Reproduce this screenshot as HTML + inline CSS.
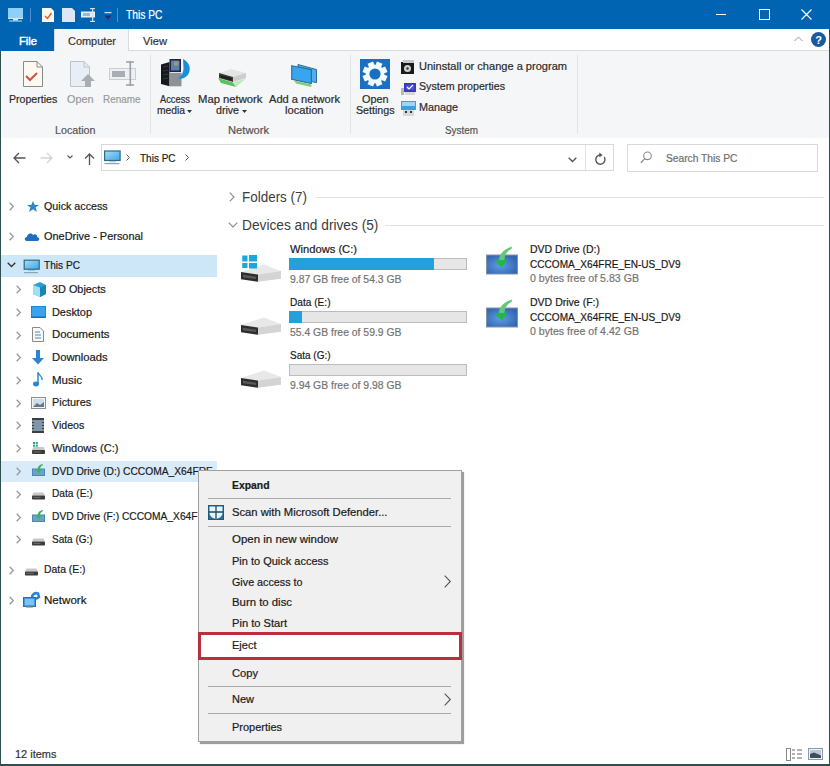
<!DOCTYPE html>
<html><head><meta charset="utf-8"><style>
html,body{margin:0;padding:0;width:830px;height:766px;overflow:hidden;background:#ffffff;position:relative}
.t{position:absolute;white-space:nowrap;-webkit-text-stroke:0.2px currentColor;font-family:"Liberation Sans",sans-serif;transform-origin:0 0}
svg{overflow:visible}
</style></head><body>
<div style="position:absolute;left:0px;top:0px;width:830px;height:29px;background:#0064b3"></div>
<div style="position:absolute;left:0px;top:29px;width:830px;height:22px;background:#ffffff"></div>
<div style="position:absolute;left:0px;top:50px;width:830px;height:1px;background:#dadbdc"></div>
<div style="position:absolute;left:0px;top:29px;width:54px;height:22px;background:#0064b3"></div>
<div style="position:absolute;left:54px;top:29px;width:75px;height:22px;background:#f5f6f7;box-shadow:inset 1px 0 0 #dadbdc, inset -1px 0 0 #dadbdc"></div>
<div class="t" style="left:19.00px;top:35.65px;font-size:11.00px;line-height:11.00px;color:#ffffff;transform:scaleX(1.0155);-webkit-text-stroke:0.45px #ffffff;">File</div>
<div class="t" style="left:68.00px;top:35.65px;font-size:11.00px;line-height:11.00px;color:#333333;transform:scaleX(0.9938);">Computer</div>
<div class="t" style="left:143.00px;top:35.65px;font-size:11.00px;line-height:11.00px;color:#333333;transform:scaleX(1.0151);">View</div>
<svg style="position:absolute;left:8px;top:8px;" width="16" height="14" viewBox="0 0 16 14"><rect x="0" y="0" width="15" height="10" fill="#8fd0fb"/><rect x="0" y="10" width="15" height="1" fill="#d8f0ff"/><rect x="5" y="11" width="5" height="1.5" fill="#cdeafd"/><rect x="1" y="12.5" width="13" height="1" fill="#bfe4fb"/></svg>
<div style="position:absolute;left:30px;top:8px;width:1px;height:14px;background:#4d8fd0"></div>
<svg style="position:absolute;left:42px;top:8px;" width="12" height="14" viewBox="0 0 12 14"><path d="M0 0H9L12 3V14H0Z" fill="#fdf7ef"/><path d="M3 8L5.5 10.5L9.5 5" stroke="#d0603a" stroke-width="1.4" fill="none"/></svg>
<svg style="position:absolute;left:62px;top:8px;" width="13" height="14" viewBox="0 0 13 14"><path d="M0 0H10L13 3V14H0Z" fill="#dbe8f6"/></svg>
<svg style="position:absolute;left:81px;top:8px;" width="16" height="14" viewBox="0 0 16 14"><rect x="0" y="3.5" width="14" height="6" fill="#e6eef6"/><rect x="2" y="5" width="7" height="3" fill="#9fb6cc"/><rect x="11" y="0" width="1.2" height="14" fill="#cfe0f0"/><rect x="9" y="0" width="5" height="1.2" fill="#cfe0f0"/><rect x="9" y="12.8" width="5" height="1.2" fill="#cfe0f0"/></svg>
<svg style="position:absolute;left:104px;top:12px;" width="8" height="8" viewBox="0 0 8 8"><rect x="0.5" y="0" width="7" height="1.2" fill="#cfe3f7"/><path d="M0.5 3.5H7.5L4 7.5Z" fill="#2b2b6b"/></svg>
<div style="position:absolute;left:117px;top:8px;width:1px;height:14px;background:#4d8fd0"></div>
<div class="t" style="left:126.00px;top:8.80px;font-size:12.00px;line-height:12.00px;color:#ffffff;transform:scaleX(0.8553);">This PC</div>
<div style="position:absolute;left:716px;top:14px;width:10px;height:1px;background:#ffffff"></div>
<div style="position:absolute;left:759px;top:9px;width:9px;height:9px;border:1px solid #ffffff"></div>
<svg style="position:absolute;left:801px;top:9px;" width="12" height="11" viewBox="0 0 12 11"><path d="M0.5 0.5L10.5 10.5M10.5 0.5L0.5 10.5" stroke="#fff" stroke-width="1.1"/></svg>
<svg style="position:absolute;left:794px;top:36px;" width="9" height="6" viewBox="0 0 9 6"><path d="M0.5 5L4.5 1L8.5 5" stroke="#9a9a9a" stroke-width="1" fill="none"/></svg>
<svg style="position:absolute;left:811px;top:32px;" width="15" height="15" viewBox="0 0 15 15"><circle cx="7.5" cy="7.5" r="7.5" fill="#1c5aa0"/><text x="7.5" y="12" font-family="Liberation Sans" font-weight="bold" font-size="11" fill="#fff" text-anchor="middle">?</text></svg>
<div style="position:absolute;left:0px;top:51px;width:830px;height:87px;background:#f5f6f7"></div>
<div style="position:absolute;left:0px;top:138px;width:830px;height:1px;background:#dadbdc"></div>
<div style="position:absolute;left:150px;top:55px;width:1px;height:79px;background:#e2e3e4"></div>
<div style="position:absolute;left:350px;top:55px;width:1px;height:79px;background:#e2e3e4"></div>
<div style="position:absolute;left:577px;top:55px;width:1px;height:79px;background:#e2e3e4"></div>
<div class="t" style="left:9.00px;top:93.65px;font-size:11.00px;line-height:11.00px;color:#2b2b2b;transform:scaleX(0.9614);">Properties</div>
<div class="t" style="left:67.00px;top:93.65px;font-size:11.00px;line-height:11.00px;color:#9a9a9a;transform:scaleX(0.9848);">Open</div>
<div class="t" style="left:103.00px;top:93.65px;font-size:11.00px;line-height:11.00px;color:#9a9a9a;transform:scaleX(0.8995);">Rename</div>
<div class="t" style="left:55.00px;top:125.45px;font-size:11.00px;line-height:11.00px;color:#555555;transform:scaleX(0.9714);">Location</div>
<div class="t" style="left:160.00px;top:93.65px;font-size:11.00px;line-height:11.00px;color:#2b2b2b;transform:scaleX(0.8462);">Access</div>
<div class="t" style="left:157.00px;top:105.15px;font-size:11.00px;line-height:11.00px;color:#2b2b2b;transform:scaleX(0.9346);">media</div>
<div class="t" style="left:198.40px;top:93.65px;font-size:11.00px;line-height:11.00px;color:#2b2b2b;transform:scaleX(1.0243);">Map network</div>
<div class="t" style="left:216.00px;top:105.15px;font-size:11.00px;line-height:11.00px;color:#2b2b2b;transform:scaleX(0.9646);">drive</div>
<div class="t" style="left:269.00px;top:93.65px;font-size:11.00px;line-height:11.00px;color:#2b2b2b;transform:scaleX(1.0097);">Add a network</div>
<div class="t" style="left:284.70px;top:105.15px;font-size:11.00px;line-height:11.00px;color:#2b2b2b;transform:scaleX(1.0180);">location</div>
<div class="t" style="left:228.00px;top:125.45px;font-size:11.00px;line-height:11.00px;color:#555555;transform:scaleX(1.0163);">Network</div>
<div class="t" style="left:362.00px;top:93.65px;font-size:11.00px;line-height:11.00px;color:#2b2b2b;transform:scaleX(0.9848);">Open</div>
<div class="t" style="left:356.00px;top:105.15px;font-size:11.00px;line-height:11.00px;color:#2b2b2b;transform:scaleX(0.9711);">Settings</div>
<div class="t" style="left:419.10px;top:60.55px;font-size:11.00px;line-height:11.00px;color:#2b2b2b;transform:scaleX(1.0043);">Uninstall or change a program</div>
<div class="t" style="left:419.10px;top:81.25px;font-size:11.00px;line-height:11.00px;color:#2b2b2b;transform:scaleX(0.9701);">System properties</div>
<div class="t" style="left:419.10px;top:102.05px;font-size:11.00px;line-height:11.00px;color:#2b2b2b;transform:scaleX(0.9811);">Manage</div>
<div class="t" style="left:445.20px;top:125.45px;font-size:11.00px;line-height:11.00px;color:#555555;transform:scaleX(0.8998);">System</div>
<svg style="position:absolute;left:187px;top:110px;" width="5" height="3" viewBox="0 0 5 3"><path d="M0 0H5L2.5 3Z" fill="#333"/></svg>
<svg style="position:absolute;left:242px;top:110px;" width="5" height="3" viewBox="0 0 5 3"><path d="M0 0H5L2.5 3Z" fill="#333"/></svg>
<svg style="position:absolute;left:23px;top:61px;" width="20" height="26" viewBox="0 0 20 26"><path d="M0.5 0.5H14L19.5 6V25.5H0.5Z" fill="#fdf8f2" stroke="#8a8a8a"/><path d="M14 0.5V6H19.5" fill="none" stroke="#8a8a8a"/><path d="M3 15L7 19L14 12" stroke="#c9573a" stroke-width="2" fill="none"/></svg>
<svg style="position:absolute;left:70px;top:61px;" width="26" height="26" viewBox="0 0 26 26"><path d="M0.5 0.5H14L19.5 6V25.5H0.5Z" fill="#e8eef6" stroke="#bcc3cb"/><path d="M14 0.5V6H19.5" fill="none" stroke="#bcc3cb"/><path d="M11 20L18 13L25 20H21V26H15V20Z" fill="#a9adb2"/></svg>
<svg style="position:absolute;left:109px;top:61px;" width="27" height="25" viewBox="0 0 27 25"><rect x="0.5" y="7.5" width="26" height="11" fill="#eef1f4" stroke="#c9ced3"/><rect x="3" y="10" width="13" height="6" fill="#a8aeb4"/><rect x="20.5" y="0" width="1.6" height="25" fill="#9aa0a6"/><path d="M17 1H25M17 24H25" stroke="#9aa0a6" stroke-width="1.6"/></svg>
<svg style="position:absolute;left:161px;top:58px;" width="30" height="29" viewBox="0 0 30 29"><path d="M0 6.5L8.5 4V28.3L0 26Z" fill="#161a1e"/><path d="M2 9L7 8M2 13L7 12M2 17L7 16M2 21L7 20" stroke="#3a4048" stroke-width="0.8"/><rect x="8.5" y="14.8" width="12" height="13.5" fill="#8d9297"/><rect x="8.5" y="1" width="11.5" height="13" fill="#1c2440"/><rect x="10" y="2.5" width="8.5" height="10" fill="#5d7cb4"/><rect x="13" y="3.5" width="4.5" height="4" fill="#8fa070"/><path d="M22 1C28 4 30.5 10 27.5 16C25 20 21 21.5 16.5 20.5C20 18.5 22.5 15 22.5 10Z" fill="#1d8fd6"/></svg>
<svg style="position:absolute;left:215px;top:66px;" width="33" height="23" viewBox="0 0 33 23"><path d="M4 7L16 3L31 7L18 11Z" fill="#e4e4e4"/><path d="M4 7L18 11V16L4 12Z" fill="#3a3a3a"/><path d="M5.5 9L16.5 12V14.5L5.5 11.5Z" fill="#1e1e1e"/><path d="M18 11L31 7V12L18 16Z" fill="#cdcdcd"/><path d="M3 12L18 16.5L21 21L6 17Z" fill="#5cc060"/><path d="M18 16.5L31 12.5L21 21Z" fill="#bfe8c0"/></svg>
<svg style="position:absolute;left:291px;top:64px;" width="27" height="24" viewBox="0 0 27 24"><path d="M7 0.5L25.5 5.6V18.6L20.3 17.5V5.8L7 3Z" fill="#4fb0ea" stroke="#2c6d9c" stroke-width="1"/><path d="M0.7 1.7L20.3 5.8V19.5L0.7 15.2Z" fill="#38a6ee" stroke="#2c6d9c" stroke-width="1.1"/><path d="M3 16.5L20 20.5L20.5 23L5 19.5Z" fill="#7fcc78"/></svg>
<svg style="position:absolute;left:360px;top:59px;" width="30" height="30" viewBox="0 0 30 30"><rect width="30" height="30" fill="#1b6fc2"/><g transform="translate(15 15)" fill="#f4fbff"><rect x="-3" y="-12.3" width="6" height="6" transform="rotate(22.5)"/><rect x="-3" y="-12.3" width="6" height="6" transform="rotate(67.5)"/><rect x="-3" y="-12.3" width="6" height="6" transform="rotate(112.5)"/><rect x="-3" y="-12.3" width="6" height="6" transform="rotate(157.5)"/><rect x="-3" y="-12.3" width="6" height="6" transform="rotate(202.5)"/><rect x="-3" y="-12.3" width="6" height="6" transform="rotate(247.5)"/><rect x="-3" y="-12.3" width="6" height="6" transform="rotate(292.5)"/><rect x="-3" y="-12.3" width="6" height="6" transform="rotate(337.5)"/><circle r="9.3"/></g><circle cx="15" cy="15" r="5.6" fill="#1b6fc2"/></svg>
<svg style="position:absolute;left:401px;top:60px;" width="14" height="14" viewBox="0 0 14 14"><rect x="0" y="2" width="13" height="12" fill="#1a1a1a"/><rect x="2" y="0" width="11" height="3" fill="#c8c8c8"/><circle cx="6.5" cy="8.5" r="3.5" fill="#d0d0d0"/><circle cx="6.5" cy="8.5" r="1.2" fill="#333"/></svg>
<svg style="position:absolute;left:401px;top:82px;" width="15" height="13" viewBox="0 0 15 13"><rect x="0" y="6" width="3" height="7" fill="#b8b8b8"/><rect x="3" y="1" width="12" height="9" fill="#3a3ac0"/><rect x="5" y="3" width="8" height="5" fill="#4d4dd8"/><path d="M6 5L8 7L12 3" stroke="#fff" stroke-width="1.2" fill="none"/><rect x="4" y="10" width="10" height="3" fill="#d8d8d8"/></svg>
<svg style="position:absolute;left:401px;top:101px;" width="15" height="15" viewBox="0 0 15 15"><rect x="0" y="0" width="15" height="9" fill="#3ba0e0"/><rect x="1" y="1" width="13" height="4" fill="#9fd4f5"/><rect x="2" y="9" width="11" height="6" fill="#d8d8d8"/><rect x="4" y="10" width="2" height="2" fill="#333"/><rect x="9" y="10" width="2" height="2" fill="#333"/></svg>
<div style="position:absolute;left:0px;top:138px;width:830px;height:40px;background:#ffffff"></div>
<svg style="position:absolute;left:13px;top:152px;" width="13" height="12" viewBox="0 0 13 12"><path d="M6 1L1 6L6 11M1 6H12.5" stroke="#555" stroke-width="1.3" fill="none"/></svg>
<svg style="position:absolute;left:40px;top:152px;" width="13" height="12" viewBox="0 0 13 12"><path d="M7 1L12 6L7 11M0.5 6H12" stroke="#d4d4d4" stroke-width="1.3" fill="none"/></svg>
<svg style="position:absolute;left:67px;top:155px;" width="6" height="4" viewBox="0 0 6 4"><path d="M0.5 0.5L3 3L5.5 0.5" stroke="#555" stroke-width="1.1" fill="none"/></svg>
<svg style="position:absolute;left:84px;top:153px;" width="11" height="12" viewBox="0 0 11 12"><path d="M1 5.5L5.5 1L10 5.5M5.5 1V12" stroke="#555" stroke-width="1.3" fill="none"/></svg>
<div style="position:absolute;left:101px;top:144px;width:513px;height:27px;border:1px solid #d9d9d9;box-sizing:border-box"></div>
<div style="position:absolute;left:585px;top:145px;width:1px;height:25px;background:#e3e3e3"></div>
<svg style="position:absolute;left:104px;top:150px;" width="17" height="15" viewBox="0 0 17 15"><defs><linearGradient id="mg2" x1="0" y1="0" x2="1" y2="1"><stop offset="0" stop-color="#a8dcf8"/><stop offset="1" stop-color="#3aa8e6"/></linearGradient></defs><rect x="0.6" y="1" width="15.5" height="9.5" fill="url(#mg2)" stroke="#2f6a86" stroke-width="1.2"/><rect x="5" y="11.3" width="7" height="1" fill="#9cc4dc"/><rect x="0.5" y="13" width="15" height="1.2" fill="#8aa4bc"/></svg>
<svg style="position:absolute;left:126px;top:154px;" width="4" height="7" viewBox="0 0 4 7"><path d="M0.5 0.5L3.5 3.5L0.5 6.5" stroke="#555" stroke-width="1" fill="none"/></svg>
<div class="t" style="left:140.00px;top:152.92px;font-size:11.50px;line-height:11.50px;color:#1a1a1a;transform:scaleX(0.8705);">This PC</div>
<svg style="position:absolute;left:185px;top:154px;" width="4" height="7" viewBox="0 0 4 7"><path d="M0.5 0.5L3.5 3.5L0.5 6.5" stroke="#555" stroke-width="1" fill="none"/></svg>
<svg style="position:absolute;left:568px;top:156.5px;" width="9" height="6" viewBox="0 0 9 6"><path d="M0.7 0.7L4.5 4.5L8.3 0.7" stroke="#555" stroke-width="1.4" fill="none"/></svg>
<svg style="position:absolute;left:594px;top:152px;" width="13" height="14" viewBox="0 0 13 14"><path d="M10.3 5.2A4.6 4.6 0 1 1 6.5 3" stroke="#555" stroke-width="1.4" fill="none"/><path d="M5.3 0.6L8.6 3L5.3 5.4Z" fill="#555"/></svg>
<div style="position:absolute;left:627px;top:144px;width:191px;height:28px;border:1px solid #d9d9d9;box-sizing:border-box"></div>
<svg style="position:absolute;left:640px;top:151px;" width="12" height="13" viewBox="0 0 12 13"><circle cx="7.5" cy="4.8" r="3.8" stroke="#8a8a8a" stroke-width="1.1" fill="none"/><path d="M4.8 7.6L0.8 11.8" stroke="#8a8a8a" stroke-width="1.3"/></svg>
<div class="t" style="left:665.70px;top:153.15px;font-size:11.00px;line-height:11.00px;color:#6d6d6d;transform:scaleX(0.9306);">Search This PC</div>
<div style="position:absolute;left:1px;top:255px;width:216px;height:22px;background:#cde6f8"></div>
<div style="position:absolute;left:1px;top:461px;width:216px;height:21px;background:#d9ebf9"></div>
<svg style="position:absolute;left:9px;top:202px;" width="5" height="9" viewBox="0 0 5 9"><path d="M0.7 0.7L4.3 4.5L0.7 8.3" stroke="#9a9a9a" stroke-width="1.3" fill="none"/></svg>
<svg style="position:absolute;left:9px;top:232px;" width="5" height="9" viewBox="0 0 5 9"><path d="M0.7 0.7L4.3 4.5L0.7 8.3" stroke="#9a9a9a" stroke-width="1.3" fill="none"/></svg>
<svg style="position:absolute;left:7px;top:262px;" width="9" height="6" viewBox="0 0 9 6"><path d="M0.7 0.7L4.5 4.5L8.3 0.7" stroke="#333" stroke-width="1.3" fill="none"/></svg>
<div class="t" style="left:44.00px;top:200.65px;font-size:11.00px;line-height:11.00px;color:#1a1a1a;transform:scaleX(0.9739);">Quick access</div>
<div class="t" style="left:44.00px;top:230.65px;font-size:11.00px;line-height:11.00px;color:#1a1a1a;transform:scaleX(0.9935);">OneDrive - Personal</div>
<div class="t" style="left:44.00px;top:260.25px;font-size:11.00px;line-height:11.00px;color:#1a1a1a;transform:scaleX(0.9203);">This PC</div>
<svg style="position:absolute;left:27px;top:201px;" width="12" height="11" viewBox="0 0 12 11"><path d="M6 0L7.8 4H12L8.6 6.6L10 11L6 8.2L2 11L3.4 6.6L0 4H4.2Z" fill="#2f86c8"/></svg>
<svg style="position:absolute;left:24px;top:231px;" width="15" height="10" viewBox="0 0 15 10"><path d="M3 10C0 10 0 6 3 6C3 3 7 1 9 4C11 2 14 4 13 6C16 6 16 10 13 10Z" fill="#1e6fc0"/></svg>
<svg style="position:absolute;left:23px;top:259px;" width="17" height="15" viewBox="0 0 17 15"><defs><linearGradient id="mg1" x1="0" y1="0" x2="1" y2="1"><stop offset="0" stop-color="#a8dcf8"/><stop offset="1" stop-color="#3aa8e6"/></linearGradient></defs><rect x="1.2" y="1.2" width="15" height="9" fill="url(#mg1)" stroke="#2f6a86" stroke-width="1.2"/><rect x="5" y="11" width="7" height="1" fill="#9cc4dc"/><rect x="1" y="13" width="14" height="1.2" fill="#8aa4bc"/></svg>
<svg style="position:absolute;left:16px;top:285px;" width="5" height="9" viewBox="0 0 5 9"><path d="M0.7 0.7L4.3 4.5L0.7 8.3" stroke="#9a9a9a" stroke-width="1.3" fill="none"/></svg>
<div class="t" style="left:51.50px;top:283.65px;font-size:11.00px;line-height:11.00px;color:#1a1a1a;transform:scaleX(0.9869);">3D Objects</div>
<svg style="position:absolute;left:16px;top:308px;" width="5" height="9" viewBox="0 0 5 9"><path d="M0.7 0.7L4.3 4.5L0.7 8.3" stroke="#9a9a9a" stroke-width="1.3" fill="none"/></svg>
<div class="t" style="left:51.50px;top:306.65px;font-size:11.00px;line-height:11.00px;color:#1a1a1a;transform:scaleX(0.9912);">Desktop</div>
<svg style="position:absolute;left:16px;top:330.6px;" width="5" height="9" viewBox="0 0 5 9"><path d="M0.7 0.7L4.3 4.5L0.7 8.3" stroke="#9a9a9a" stroke-width="1.3" fill="none"/></svg>
<div class="t" style="left:51.50px;top:329.25px;font-size:11.00px;line-height:11.00px;color:#1a1a1a;transform:scaleX(1.0335);">Documents</div>
<svg style="position:absolute;left:16px;top:353.3px;" width="5" height="9" viewBox="0 0 5 9"><path d="M0.7 0.7L4.3 4.5L0.7 8.3" stroke="#9a9a9a" stroke-width="1.3" fill="none"/></svg>
<div class="t" style="left:51.50px;top:351.95px;font-size:11.00px;line-height:11.00px;color:#1a1a1a;transform:scaleX(1.0235);">Downloads</div>
<svg style="position:absolute;left:16px;top:375.9px;" width="5" height="9" viewBox="0 0 5 9"><path d="M0.7 0.7L4.3 4.5L0.7 8.3" stroke="#9a9a9a" stroke-width="1.3" fill="none"/></svg>
<div class="t" style="left:51.50px;top:374.55px;font-size:11.00px;line-height:11.00px;color:#1a1a1a;transform:scaleX(1.0444);">Music</div>
<svg style="position:absolute;left:16px;top:398.6px;" width="5" height="9" viewBox="0 0 5 9"><path d="M0.7 0.7L4.3 4.5L0.7 8.3" stroke="#9a9a9a" stroke-width="1.3" fill="none"/></svg>
<div class="t" style="left:51.50px;top:397.25px;font-size:11.00px;line-height:11.00px;color:#1a1a1a;transform:scaleX(0.9865);">Pictures</div>
<svg style="position:absolute;left:16px;top:421.3px;" width="5" height="9" viewBox="0 0 5 9"><path d="M0.7 0.7L4.3 4.5L0.7 8.3" stroke="#9a9a9a" stroke-width="1.3" fill="none"/></svg>
<div class="t" style="left:51.50px;top:419.95px;font-size:11.00px;line-height:11.00px;color:#1a1a1a;transform:scaleX(0.9660);">Videos</div>
<svg style="position:absolute;left:16px;top:444px;" width="5" height="9" viewBox="0 0 5 9"><path d="M0.7 0.7L4.3 4.5L0.7 8.3" stroke="#9a9a9a" stroke-width="1.3" fill="none"/></svg>
<div class="t" style="left:51.50px;top:442.65px;font-size:11.00px;line-height:11.00px;color:#1a1a1a;transform:scaleX(1.0060);">Windows (C:)</div>
<svg style="position:absolute;left:16px;top:467px;" width="5" height="9" viewBox="0 0 5 9"><path d="M0.7 0.7L4.3 4.5L0.7 8.3" stroke="#9a9a9a" stroke-width="1.3" fill="none"/></svg>
<div style="position:absolute;left:0;top:461px;width:217px;height:20px;overflow:hidden">
<div class="t" style="left:51.5px;top:4.65px;font-size:11px;line-height:11px;color:#1a1a1a;transform:scaleX(0.930)">DVD Drive (D:) CCCOMA_X64FRE</div></div>
<svg style="position:absolute;left:16px;top:489.7px;" width="5" height="9" viewBox="0 0 5 9"><path d="M0.7 0.7L4.3 4.5L0.7 8.3" stroke="#9a9a9a" stroke-width="1.3" fill="none"/></svg>
<div class="t" style="left:51.50px;top:488.35px;font-size:11.00px;line-height:11.00px;color:#1a1a1a;transform:scaleX(0.9248);">Data (E:)</div>
<svg style="position:absolute;left:16px;top:512.5px;" width="5" height="9" viewBox="0 0 5 9"><path d="M0.7 0.7L4.3 4.5L0.7 8.3" stroke="#9a9a9a" stroke-width="1.3" fill="none"/></svg>
<div style="position:absolute;left:0;top:506px;width:199px;height:20px;overflow:hidden">
<div class="t" style="left:51.5px;top:4.65px;font-size:11px;line-height:11px;color:#1a1a1a;transform:scaleX(0.930)">DVD Drive (F:) CCCOMA_X64FRE</div></div>
<svg style="position:absolute;left:16px;top:535.2px;" width="5" height="9" viewBox="0 0 5 9"><path d="M0.7 0.7L4.3 4.5L0.7 8.3" stroke="#9a9a9a" stroke-width="1.3" fill="none"/></svg>
<div class="t" style="left:51.50px;top:533.85px;font-size:11.00px;line-height:11.00px;color:#1a1a1a;transform:scaleX(0.9121);">Sata (G:)</div>
<svg style="position:absolute;left:31px;top:282px;" width="15" height="15" viewBox="0 0 15 15"><path d="M2 3L9 0L15 3V12L9 15L2 12Z" fill="#2aa0d0"/><path d="M2 3L9 5.5V15L2 12Z" fill="#9fe0f5"/><path d="M9 5.5L15 3V12L9 15Z" fill="#1a86b8"/></svg>
<svg style="position:absolute;left:31px;top:306px;" width="15" height="12" viewBox="0 0 15 12"><rect x="0" y="0" width="15" height="11" fill="#1d87d8"/><rect x="1" y="1" width="13" height="9" fill="#3aa3ee"/><rect x="0" y="11" width="15" height="1" fill="#2868a0"/></svg>
<svg style="position:absolute;left:32px;top:326.6px;" width="12" height="15" viewBox="0 0 12 15"><path d="M0.5 0.5H8L11.5 4V14.5H0.5Z" fill="#f8f8f8" stroke="#8a8a8a"/><path d="M3 5H8M3 8H9M3 11H9" stroke="#4a8abc" stroke-width="1"/></svg>
<svg style="position:absolute;left:31px;top:350.3px;" width="14" height="15" viewBox="0 0 14 15"><path d="M5 0H9V8H13L7 14.5L1 8H5Z" fill="#2a86d0"/></svg>
<svg style="position:absolute;left:33px;top:371.9px;" width="11" height="15" viewBox="0 0 11 15"><path d="M5 0.5V11" stroke="#2a86d0" stroke-width="1.5"/><ellipse cx="3" cy="12" rx="3" ry="2.4" fill="#2a86d0"/><path d="M5 0.5C6 4 10 4 9 8" stroke="#2a86d0" stroke-width="1.3" fill="none"/></svg>
<svg style="position:absolute;left:31px;top:396.6px;" width="15" height="12" viewBox="0 0 15 12"><rect x="0.5" y="0.5" width="14" height="11" fill="#f4f4f4" stroke="#8f8f8f"/><rect x="2" y="2" width="11" height="8" fill="#cfdde8"/><path d="M2 10L6 6L9 8L13 5V10Z" fill="#607890"/></svg>
<svg style="position:absolute;left:32px;top:418.3px;" width="12" height="15" viewBox="0 0 12 15"><rect x="0" y="0" width="12" height="15" fill="#3a3f44"/><rect x="2" y="2" width="8" height="11" fill="#7b96ad"/><path d="M0 3H2M0 6H2M0 9H2M0 12H2M10 3H12M10 6H12M10 9H12M10 12H12" stroke="#ddd" stroke-width="1"/></svg>
<svg style="position:absolute;left:32px;top:442px;" width="13" height="14" viewBox="0 0 13 14"><path d="M1 0H3V2H1ZM3.8 0H5.8V2H3.8ZM1 2.8H3V4.8H1ZM3.8 2.8H5.8V4.8H3.8Z" fill="#2aa08a"/><path d="M1.5 5H11.5L13 8H0Z" fill="#c8c8c8"/><rect x="0" y="8" width="13" height="4" rx="0.8" fill="#3c3c3c"/><rect x="1.5" y="9.3" width="7" height="1.2" fill="#666"/></svg>
<svg style="position:absolute;left:32px;top:464px;" width="13" height="12" viewBox="0 0 13 12"><rect x="0" y="4.5" width="13" height="7.5" fill="#4a86b8"/><rect x="1" y="5.5" width="11" height="5.5" fill="#6aa2cc"/><path d="M5.5 5C6 2 8 0.5 11 0L10.5 1.5C9 2 8 3.5 8 5.5H10L6.8 9L3.5 5.5H5.5Z" fill="#3cb45a"/></svg>
<svg style="position:absolute;left:32px;top:492.2px;" width="13" height="8" viewBox="0 0 13 8"><path d="M1.5 0.5H11.5L13 3.5H0Z" fill="#c8c8c8"/><rect x="0" y="3.5" width="13" height="4" rx="0.8" fill="#3c3c3c"/><rect x="1.5" y="4.8" width="7" height="1.2" fill="#666"/></svg>
<svg style="position:absolute;left:32px;top:509.5px;" width="13" height="12" viewBox="0 0 13 12"><rect x="0" y="4.5" width="13" height="7.5" fill="#4a86b8"/><rect x="1" y="5.5" width="11" height="5.5" fill="#6aa2cc"/><path d="M5.5 5C6 2 8 0.5 11 0L10.5 1.5C9 2 8 3.5 8 5.5H10L6.8 9L3.5 5.5H5.5Z" fill="#3cb45a"/></svg>
<svg style="position:absolute;left:32px;top:537.7px;" width="13" height="8" viewBox="0 0 13 8"><path d="M1.5 0.5H11.5L13 3.5H0Z" fill="#c8c8c8"/><rect x="0" y="3.5" width="13" height="4" rx="0.8" fill="#3c3c3c"/><rect x="1.5" y="4.8" width="7" height="1.2" fill="#666"/></svg>
<svg style="position:absolute;left:9px;top:565.6px;" width="5" height="9" viewBox="0 0 5 9"><path d="M0.7 0.7L4.3 4.5L0.7 8.3" stroke="#9a9a9a" stroke-width="1.3" fill="none"/></svg>
<svg style="position:absolute;left:9px;top:596px;" width="5" height="9" viewBox="0 0 5 9"><path d="M0.7 0.7L4.3 4.5L0.7 8.3" stroke="#9a9a9a" stroke-width="1.3" fill="none"/></svg>
<div class="t" style="left:43.70px;top:564.25px;font-size:11.00px;line-height:11.00px;color:#1a1a1a;transform:scaleX(0.9429);">Data (E:)</div>
<div class="t" style="left:43.70px;top:594.65px;font-size:11.00px;line-height:11.00px;color:#1a1a1a;transform:scaleX(1.0535);">Network</div>
<svg style="position:absolute;left:25px;top:568px;" width="13" height="8" viewBox="0 0 13 8"><path d="M1.5 0.5H11.5L13 3.5H0Z" fill="#c8c8c8"/><rect x="0" y="3.5" width="13" height="4" rx="0.8" fill="#3c3c3c"/><rect x="1.5" y="4.8" width="7" height="1.2" fill="#666"/></svg>
<svg style="position:absolute;left:23px;top:592px;" width="17" height="16" viewBox="0 0 17 16"><path d="M9 6C9 2 12 0.5 15 1.5L16 5L13 7" stroke="#2a86d0" stroke-width="2.6" fill="none"/><rect x="0.5" y="5.5" width="12" height="9" fill="#3e9be0" stroke="#2a6ea8"/><rect x="2" y="7" width="9" height="6" fill="#7cc4f4"/><rect x="3" y="14.5" width="7" height="1.2" fill="#999"/></svg>
<svg style="position:absolute;left:229px;top:192px;" width="6" height="10" viewBox="0 0 6 10"><path d="M0.7 0.7L5 5L0.7 9.3" stroke="#8a8a8a" stroke-width="1.1" fill="none"/></svg>
<div class="t" style="left:242.00px;top:190.30px;font-size:14.00px;line-height:14.00px;color:#3c3c3c;transform:scaleX(0.9604);-webkit-text-stroke-width:0px;">Folders (7)</div>
<div style="position:absolute;left:316px;top:197px;width:508px;height:1px;background:#e2e2e2"></div>
<svg style="position:absolute;left:228px;top:222px;" width="10" height="6" viewBox="0 0 10 6"><path d="M0.7 0.7L5 5L9.3 0.7" stroke="#8a8a8a" stroke-width="1.1" fill="none"/></svg>
<div class="t" style="left:242.00px;top:218.30px;font-size:14.00px;line-height:14.00px;color:#3c3c3c;transform:scaleX(0.9794);-webkit-text-stroke-width:0px;">Devices and drives (5)</div>
<div style="position:absolute;left:385px;top:225px;width:439px;height:1px;background:#e2e2e2"></div>
<svg style="position:absolute;left:241px;top:255px;" width="41" height="31" viewBox="0 0 41 31"><g transform="translate(0 9)"><path d="M0 8L23 0.5L40 7L17 10.5Z" fill="#e8e8e8"/><path d="M17 10.5L40 7V14.7L17 17.7Z" fill="#d4d4d4"/><path d="M0 8L17 10.5V17.7L0 15.3Z" fill="#2e2e2e"/><path d="M2 10.8L15 12.8V15L2 13.2Z" fill="#5a5a5a"/></g><g transform="translate(0.5 -0.5)"><path d="M0.7 1H6V7H0.7Z" fill="#1ea6dc"/><path d="M7.5 0.5H15.5V7H7.5Z" fill="#1ea6dc"/><path d="M0.7 8.5H6V13.5H0.7Z" fill="#1ea6dc"/><path d="M7.5 8.5H15.5V14H7.5Z" fill="#1ea6dc"/></g></svg>
<svg style="position:absolute;left:241px;top:317px;" width="41" height="19" viewBox="0 0 41 19"><path d="M0 8L23 0.5L40 7L17 10.5Z" fill="#e8e8e8"/><path d="M17 10.5L40 7V14.7L17 17.7Z" fill="#d4d4d4"/><path d="M0 8L17 10.5V17.7L0 15.3Z" fill="#2e2e2e"/><path d="M2 10.8L15 12.8V15L2 13.2Z" fill="#5a5a5a"/></svg>
<svg style="position:absolute;left:241px;top:370px;" width="41" height="19" viewBox="0 0 41 19"><path d="M0 8L23 0.5L40 7L17 10.5Z" fill="#e8e8e8"/><path d="M17 10.5L40 7V14.7L17 17.7Z" fill="#d4d4d4"/><path d="M0 8L17 10.5V17.7L0 15.3Z" fill="#2e2e2e"/><path d="M2 10.8L15 12.8V15L2 13.2Z" fill="#5a5a5a"/></svg>
<div class="t" style="left:289.50px;top:243.95px;font-size:11.00px;line-height:11.00px;color:#1a1a1a;transform:scaleX(1.0151);">Windows (C:)</div>
<div style="position:absolute;left:289px;top:258.0px;width:178px;height:12px;background:#e6e6e6;border:1px solid #bcbcbc;box-sizing:border-box"></div>
<div style="position:absolute;left:289px;top:258.0px;width:145px;height:12px;background:#26a0da"></div>
<div class="t" style="left:289.50px;top:273.65px;font-size:11.00px;line-height:11.00px;color:#737373;transform:scaleX(0.9448);">9.87 GB free of 54.3 GB</div>
<div class="t" style="left:289.50px;top:296.95px;font-size:11.00px;line-height:11.00px;color:#1a1a1a;transform:scaleX(0.9202);">Data (E:)</div>
<div style="position:absolute;left:289px;top:311.0px;width:178px;height:12px;background:#e6e6e6;border:1px solid #bcbcbc;box-sizing:border-box"></div>
<div style="position:absolute;left:289px;top:311.0px;width:13px;height:12px;background:#26a0da"></div>
<div class="t" style="left:289.50px;top:326.65px;font-size:11.00px;line-height:11.00px;color:#737373;transform:scaleX(0.9448);">55.4 GB free of 59.9 GB</div>
<div class="t" style="left:289.50px;top:349.95px;font-size:11.00px;line-height:11.00px;color:#1a1a1a;transform:scaleX(0.9076);">Sata (G:)</div>
<div style="position:absolute;left:289px;top:364.0px;width:178px;height:12px;background:#e6e6e6;border:1px solid #bcbcbc;box-sizing:border-box"></div>
<div class="t" style="left:289.50px;top:379.65px;font-size:11.00px;line-height:11.00px;color:#737373;transform:scaleX(0.9448);">9.94 GB free of 9.98 GB</div>
<svg style="position:absolute;left:486px;top:246px;" width="33" height="30" viewBox="0 0 33 30"><defs><radialGradient id="dg246" cx="0.45" cy="0.55" r="0.6"><stop offset="0" stop-color="#5c9ee6"/><stop offset="1" stop-color="#3564b0"/></radialGradient></defs><rect x="0.5" y="9" width="31" height="19" fill="url(#dg246)" stroke="#8494ac" stroke-width="1"/><path d="M13 14C13 8 18 3 26 0.5L25.5 3C21 5 18.5 9 18.5 14Z" fill="#62c878"/><path d="M8 14.5L21.5 13.8L15.8 21.5Z" fill="#22b845"/></svg>
<svg style="position:absolute;left:486px;top:299px;" width="33" height="30" viewBox="0 0 33 30"><defs><radialGradient id="dg299" cx="0.45" cy="0.55" r="0.6"><stop offset="0" stop-color="#5c9ee6"/><stop offset="1" stop-color="#3564b0"/></radialGradient></defs><rect x="0.5" y="9" width="31" height="19" fill="url(#dg299)" stroke="#8494ac" stroke-width="1"/><path d="M13 14C13 8 18 3 26 0.5L25.5 3C21 5 18.5 9 18.5 14Z" fill="#62c878"/><path d="M8 14.5L21.5 13.8L15.8 21.5Z" fill="#22b845"/></svg>
<div class="t" style="left:530.00px;top:243.85px;font-size:11.00px;line-height:11.00px;color:#1a1a1a;transform:scaleX(0.9546);">DVD Drive (D:)</div>
<div class="t" style="left:530.00px;top:258.55px;font-size:11.00px;line-height:11.00px;color:#1a1a1a;transform:scaleX(0.9152);">CCCOMA_X64FRE_EN-US_DV9</div>
<div class="t" style="left:530.00px;top:273.45px;font-size:11.00px;line-height:11.00px;color:#737373;transform:scaleX(0.9635);">0 bytes free of 5.83 GB</div>
<div class="t" style="left:530.00px;top:296.85px;font-size:11.00px;line-height:11.00px;color:#1a1a1a;transform:scaleX(0.9569);">DVD Drive (F:)</div>
<div class="t" style="left:530.00px;top:311.55px;font-size:11.00px;line-height:11.00px;color:#1a1a1a;transform:scaleX(0.9152);">CCCOMA_X64FRE_EN-US_DV9</div>
<div class="t" style="left:530.00px;top:326.45px;font-size:11.00px;line-height:11.00px;color:#737373;transform:scaleX(0.9635);">0 bytes free of 4.42 GB</div>
<div style="position:absolute;left:198px;top:470px;width:264px;height:272px;background:#f0f0f0;border:1px solid #a0a0a0;box-sizing:border-box;box-shadow:2px 2px 0.8px rgba(0,0,0,0.38)"></div>
<div class="t" style="left:231.60px;top:479.55px;font-size:11.00px;line-height:11.00px;color:#1a1a1a;font-weight:bold;transform:scaleX(0.9438);">Expand</div>
<div style="position:absolute;left:208px;top:498px;width:243px;height:1px;background:#a9a9a9"></div>
<svg style="position:absolute;left:208px;top:505px;" width="16" height="15" viewBox="0 0 16 15"><rect x="0" y="0" width="16" height="15" fill="#2a6e9c"/><path d="M1.5 1.5H14.5V8C14.5 11.5 11 13.5 8 14C5 13.5 1.5 11.5 1.5 8Z" fill="#e2f6fc"/><path d="M8 0.5V15M0.5 7H15.5" stroke="#1d4a66" stroke-width="1.3"/><rect x="0.5" y="0.5" width="15" height="14" fill="none" stroke="#23597e" stroke-width="1"/></svg>
<div class="t" style="left:231.60px;top:507.25px;font-size:11.00px;line-height:11.00px;color:#1a1a1a;transform:scaleX(1.0214);">Scan with Microsoft Defender...</div>
<div style="position:absolute;left:208px;top:526px;width:243px;height:1px;background:#a9a9a9"></div>
<div class="t" style="left:231.60px;top:534.45px;font-size:11.00px;line-height:11.00px;color:#1a1a1a;transform:scaleX(1.0443);">Open in new window</div>
<div class="t" style="left:231.60px;top:555.65px;font-size:11.00px;line-height:11.00px;color:#1a1a1a;transform:scaleX(0.9990);">Pin to Quick access</div>
<div class="t" style="left:231.60px;top:576.55px;font-size:11.00px;line-height:11.00px;color:#1a1a1a;transform:scaleX(0.9773);">Give access to</div>
<div class="t" style="left:231.60px;top:597.25px;font-size:11.00px;line-height:11.00px;color:#1a1a1a;transform:scaleX(1.0330);">Burn to disc</div>
<div class="t" style="left:231.60px;top:618.05px;font-size:11.00px;line-height:11.00px;color:#1a1a1a;transform:scaleX(1.0107);">Pin to Start</div>
<svg style="position:absolute;left:444px;top:575px;" width="7" height="13" viewBox="0 0 7 13"><path d="M0.7 0.7L6.3 6.5L0.7 12.3" stroke="#555" stroke-width="1.1" fill="none"/></svg>
<div style="position:absolute;left:198px;top:632px;width:264px;height:28px;background:#ffffff;border:3px solid #b8303e;box-sizing:border-box"></div>
<div class="t" style="left:231.60px;top:639.65px;font-size:11.00px;line-height:11.00px;color:#1a1a1a;transform:scaleX(1.0019);">Eject</div>
<div class="t" style="left:231.60px;top:667.65px;font-size:11.00px;line-height:11.00px;color:#1a1a1a;transform:scaleX(1.0125);">Copy</div>
<div style="position:absolute;left:208px;top:686px;width:243px;height:1px;background:#a9a9a9"></div>
<div class="t" style="left:231.60px;top:694.45px;font-size:11.00px;line-height:11.00px;color:#1a1a1a;transform:scaleX(0.9998);">New</div>
<svg style="position:absolute;left:444px;top:693px;" width="7" height="13" viewBox="0 0 7 13"><path d="M0.7 0.7L6.3 6.5L0.7 12.3" stroke="#555" stroke-width="1.1" fill="none"/></svg>
<div style="position:absolute;left:208px;top:713px;width:243px;height:1px;background:#a9a9a9"></div>
<div class="t" style="left:231.60px;top:721.85px;font-size:11.00px;line-height:11.00px;color:#1a1a1a;transform:scaleX(0.9973);">Properties</div>
<div class="t" style="left:14.50px;top:749.25px;font-size:11.00px;line-height:11.00px;color:#333333;transform:scaleX(0.9958);">12 items</div>
<svg style="position:absolute;left:786px;top:748px;" width="17" height="13" viewBox="0 0 17 13"><rect x="0.5" y="0.5" width="4" height="12" fill="#fff" stroke="#888"/><path d="M6 2H9M11 2H16M6 6H9M11 6H16M6 10H9M11 10H16" stroke="#666" stroke-width="1"/></svg>
<svg style="position:absolute;left:808px;top:748px;" width="15" height="12" viewBox="0 0 15 12"><rect x="0.5" y="0.5" width="14" height="11" fill="#eef2f6" stroke="#8a9aaa"/><rect x="2" y="2" width="11" height="8" fill="#b8c8d6"/><path d="M2 6L6 4.5L13 7.5V10H2Z" fill="#3e4e5e"/></svg>
<div style="position:absolute;left:0px;top:51px;width:1px;height:715px;background:#2f4f4f"></div>
<div style="position:absolute;left:829px;top:29px;width:1px;height:737px;background:#2f4f4f"></div>
<div style="position:absolute;left:0px;top:764px;width:830px;height:2px;background:#2f4f4f"></div>
</body></html>
